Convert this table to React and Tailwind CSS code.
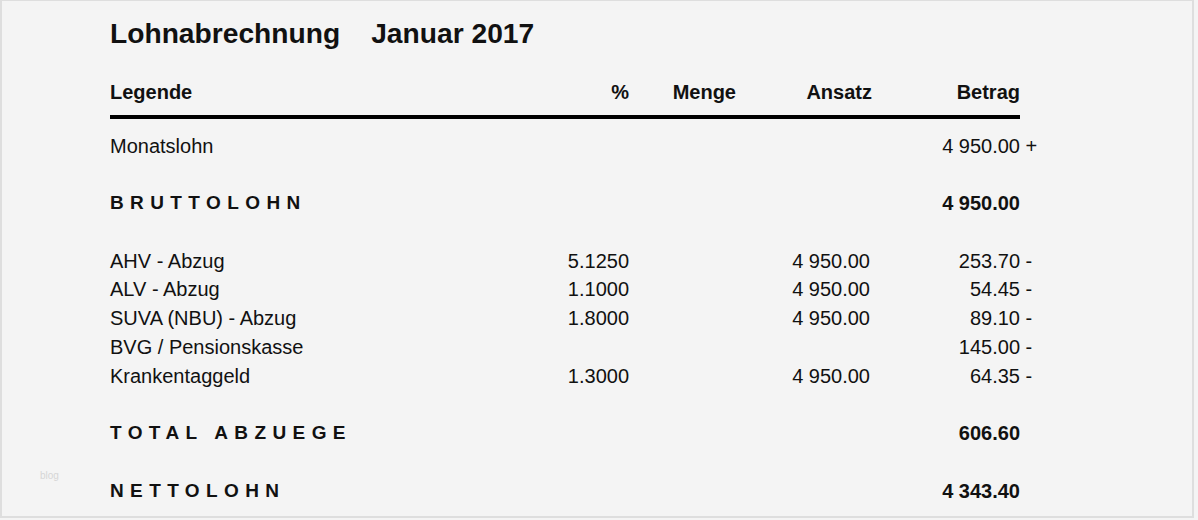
import React from "react";

const F = { fontFamily: '"Liberation Sans", Arial, sans-serif' };

function Row({ label, pct, ansatz, betrag, suffix, bold, spaced }) {
  return (
    <div className="grid grid-cols-[370px_149px_107px_136px_148px] h-[28.8px] leading-[28.8px] text-[20px]">
      <div
        className={
          "whitespace-nowrap " + (bold ? "font-bold " : "") + (spaced ? "tracking-[6.4px] text-[19px]" : "")
        }
      >
        {label}
      </div>
      <div className="text-right">{pct}</div>
      <div />
      <div className="text-right pr-[2px]">{ansatz}</div>
      <div className={"flex justify-end " + (bold ? "font-bold" : "")}>
        <span className="whitespace-nowrap">{betrag}</span>
        <span className="w-0 whitespace-nowrap">{suffix ? "\u00a0" + suffix : ""}</span>
      </div>
    </div>
  );
}

function Spacer() {
  return <div className="h-[28.8px]" />;
}

export default function App() {
  return (
    <div className="w-[1198px] h-[520px] bg-[#f4f4f4] text-[#111]" style={F}>
      <div className="w-[1194px] h-[518px] border-t border-l-2 border-r-2 border-b-2 border-[#dedede] relative">
        <div className="absolute left-[38px] top-[467px] text-[10px] text-[#d6d6d6]">blog</div>
        <div className="pl-[108px] pt-[15.5px]">
          <div className="flex text-[28.2px] font-bold leading-[32px]">
            <span>Lohnabrechnung</span>
            <span className="ml-[31px]">Januar 2017</span>
          </div>
          <div className="w-[910px] mt-[31.5px] grid grid-cols-[370px_149px_107px_136px_148px] text-[20px] font-bold leading-[24px]">
            <div>Legende</div>
            <div className="text-right">%</div>
            <div className="text-right">Menge</div>
            <div className="text-right">Ansatz</div>
            <div className="text-right">Betrag</div>
          </div>
          <div className="w-[910px] h-[4px] bg-black mt-[11px]" />
          <div className="w-[910px] mt-[12.5px]">
            <Row label="Monatslohn" betrag="4 950.00" suffix="+" />
            <Spacer />
            <Row label="BRUTTOLOHN" betrag="4 950.00" bold spaced />
            <Spacer />
            <Row label="AHV - Abzug" pct="5.1250" ansatz="4 950.00" betrag="253.70" suffix="-" />
            <Row label="ALV - Abzug" pct="1.1000" ansatz="4 950.00" betrag="54.45" suffix="-" />
            <Row label="SUVA (NBU) - Abzug" pct="1.8000" ansatz="4 950.00" betrag="89.10" suffix="-" />
            <Row label="BVG / Pensionskasse" betrag="145.00" suffix="-" />
            <Row label="Krankentaggeld" pct="1.3000" ansatz="4 950.00" betrag="64.35" suffix="-" />
            <Spacer />
            <Row label="TOTAL ABZUEGE" betrag="606.60" bold spaced />
            <Spacer />
            <Row label="NETTOLOHN" betrag="4 343.40" bold spaced />
          </div>
        </div>
      </div>
    </div>
  );
}
